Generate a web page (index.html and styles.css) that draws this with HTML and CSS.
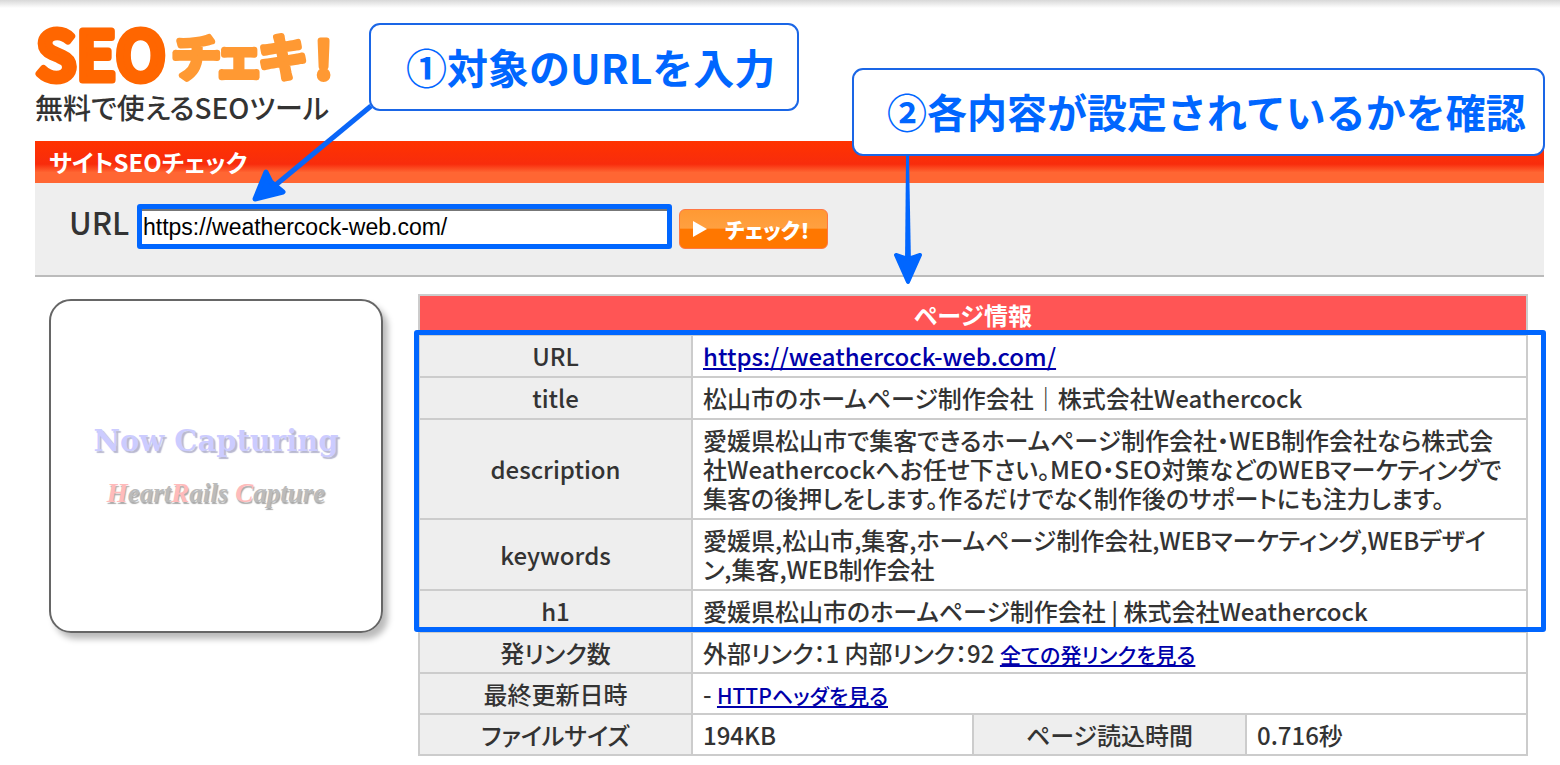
FILE: index.html
```
<!DOCTYPE html>
<html lang="ja">
<head>
    <meta charset="UTF-8">
    <meta name="viewport" content="width=device-width, initial-scale=1.0">
    <title>SEOチェキ！</title>
    <link rel="stylesheet" href="styles.css">
</head>
<body>
    <header>
        <h1>
            <svg class="logo" width="300" height="64" viewBox="0 0 300 64">
                <text class="logo-seo" x="1" y="56">SEO</text>
                <text class="logo-kana" x="138" y="52">チェキ</text>
                <text class="logo-kana" x="280" y="54">!</text>
            </svg>
        </h1>
        <p class="tagline">無料で使えるSEOツール</p>
    </header>
    <main>
        <h2 class="bar">サイトSEOチェック</h2>
        <form class="search">
            <label for="url">URL</label>
            <div class="url-box">
                <input type="text" id="url" value="https://weathercock-web.com/">
            </div>
            <button type="button">
                <svg width="14" height="16" viewBox="0 0 14 16"><path d="M0 0L14 8L0 16Z" fill="#fff"/></svg>
                <span>チェック！</span>
            </button>
        </form>

        <div class="result">
            <div class="capture">
                <p class="now">Now Capturing</p>
                <p class="heart"><b>H</b>eart<b>R</b>ails <b>C</b>apture</p>
            </div>
            <div class="info">
                <table>
                    <colgroup>
                        <col class="head">
                        <col class="data">
                        <col class="head">
                        <col class="data">
                    </colgroup>
                    <thead>
                        <tr><th colspan="4">ページ情報</th></tr>
                    </thead>
                    <tbody class="checked">
                        <tr><th>URL</th><td colspan="3"><a href="#">https://weathercock-web.com/</a></td></tr>
                        <tr><th>title</th><td colspan="3">松山市のホームページ制作会社｜株式会社Weathercock</td></tr>
                        <tr><th>description</th><td colspan="3">愛媛県松山市で集客できるホームページ制作会社・WEB制作会社なら株式会<br>社Weathercockへお任せ下さい。MEO・SEO対策などのWEBマーケティングで<br>集客の後押しをします。作るだけでなく制作後のサポートにも注力します。</td></tr>
                        <tr><th>keywords</th><td colspan="3">愛媛県,松山市,集客,ホームページ制作会社,WEBマーケティング,WEBデザイ<br>ン,集客,WEB制作会社</td></tr>
                        <tr><th>h1</th><td colspan="3">愛媛県松山市のホームページ制作会社 | 株式会社Weathercock</td></tr>
                    </tbody>
                    <tbody>
                        <tr><th>発リンク数</th><td colspan="3">外部リンク：1 内部リンク：92 <a class="more" href="#">全ての発リンクを見る</a></td></tr>
                        <tr><th>最終更新日時</th><td colspan="3">- <a class="more" href="#">HTTPヘッダを見る</a></td></tr>
                        <tr><th>ファイルサイズ</th><td>194KB</td><th>ページ読込時間</th><td>0.716秒</td></tr>
                    </tbody>
                </table>
                <div class="frame"></div>
            </div>
        </div>
    </main>

    <div class="callout callout-1">
        ①対象のURLを入力
        <svg class="arrow" width="124" height="102" viewBox="0 0 124 102">
            <path d="M121 2L22 84" stroke="#0a66f8" stroke-width="5"/>
            <path d="M5 95L16 68L21 78L33 88Z" fill="#0066ff" stroke="#0066ff" stroke-width="5" stroke-linejoin="round"/>
        </svg>
    </div>
    <div class="callout callout-2">
        ②各内容が設定されているかを確認
        <svg class="arrow" width="30" height="130" viewBox="0 0 30 130">
            <path d="M13 0H16L18 108H12Z" fill="#0066ff"/>
            <path d="M15 126L3 99L15 103L27 99Z" fill="#0066ff" stroke="#0066ff" stroke-width="4" stroke-linejoin="round"/>
        </svg>
    </div>
</body>
</html>
```
FILE: styles.css
```
* {
    box-sizing: border-box;
}

body {
    position: relative;
    margin: 0;
    padding: 24px 16px 7px 35px;
    background: linear-gradient(#d8d8d8, #ffffff 8px) no-repeat #ffffff;
    color: #333333;
    font-family: "Noto Sans CJK JP", sans-serif;
    font-feature-settings: "palt";
    font-weight: 500;
}

h1, h2, p {
    margin: 0;
}

.logo {
    display: block;
    overflow: visible;
    stroke-linejoin: round;
}

.logo-seo {
    fill: #ff6600;
    stroke: #ff6600;
    stroke-width: 7px;
    font-size: 66px;
    font-weight: 500;
}

.logo-kana {
    fill: #ff9933;
    stroke: #ff9933;
    stroke-width: 6px;
    font-size: 50px;
    font-weight: 500;
}

.tagline {
    height: 53px;
    font-size: 28px;
    line-height: 38px;
}

.bar {
    padding: 0 14px;
    background: linear-gradient(#ff3300, #f82c0c 55%, #ff6633 75%);
    color: #ffffff;
    font-size: 24px;
    font-weight: 700;
    line-height: 41px;
    height: 42px;
}

.search {
    display: flex;
    align-items: flex-start;
    height: 94px;
    padding: 21px 34px;
    background-color: #eeeeee;
    border-bottom: 2px solid #bbbbbb;
}

.search label {
    width: 68px;
    font-size: 31px;
    line-height: 36px;
}

.url-box {
    width: 535px;
    border: 5px solid #0066ff;
    border-radius: 3px;
}

.url-box input {
    display: block;
    width: 100%;
    height: 35px;
    padding: 2px 1px;
    border: 0;
    border-top: 2px solid #777777;
    background-color: #ffffff;
    color: #000000;
    font-family: "Liberation Sans", Arial, sans-serif;
    font-size: 23px;
}

.search button {
    display: flex;
    align-items: center;
    gap: 18px;
    width: 149px;
    height: 40px;
    margin: 5px 7px;
    padding: 0 13px;
    border: 1px solid #ff7744;
    border-radius: 6px;
    background: linear-gradient(#ff9933, #ffa040 48%, #ff7700 50%);
    color: #ffffff;
    font-family: inherit;
    font-feature-settings: inherit;
    font-size: 21px;
    font-weight: 900;
    white-space: nowrap;
}

.result {
    display: flex;
    align-items: flex-start;
    gap: 35px;
    padding: 17px 16px 0 14px;
}

.capture {
    flex: none;
    display: flex;
    flex-direction: column;
    align-items: center;
    width: 334px;
    height: 334px;
    margin-top: 5px;
    padding-top: 120px;
    border: 2px solid #666666;
    border-radius: 22px;
    box-shadow: 5px 6px 6px #bbbbbb;
}

.now {
    color: #ccccff;
    font-family: "DejaVu Serif", serif;
    font-size: 29px;
    font-weight: bold;
    line-height: 40px;
    text-shadow: 2px 2px 1px #b8b8d0;
}

.heart {
    margin-top: 12px;
    color: #bbbbbb;
    font-family: "Liberation Serif", serif;
    font-size: 27px;
    font-style: italic;
    font-weight: bold;
    line-height: 40px;
    text-shadow: 1px 2px 1px #aaaaaa;
}

.heart b {
    color: #ffbbbb;
}

.info {
    position: relative;
    flex: 1;
}

table {
    width: 100%;
    border-collapse: collapse;
    table-layout: fixed;
    font-size: 24px;
    line-height: 29px;
}

.head {
    width: 273px;
}

th, td {
    padding: 5px 10px;
    border: 2px solid #cccccc;
    font-weight: 500;
    text-align: left;
}

.checked th, .checked td {
    padding-bottom: 6px;
}

th {
    background-color: #eeeeee;
    text-align: center;
}

thead th {
    padding: 4px 10px 5px;
    background-color: #ff5555;
    color: #ffffff;
    font-weight: 700;
}

a {
    color: #0000aa;
}

.more {
    font-size: 21px;
    line-height: 1;
}

/* outline round the checked rows */
.frame {
    position: absolute;
    top: 36px;
    right: -18px;
    left: -4px;
    height: 302px;
    border: 5px solid #0066ff;
    border-radius: 3px;
}

.callout {
    position: absolute;
    height: 88px;
    border: 2px solid #1a66e6;
    border-radius: 11px;
    background-color: #ffffff;
    color: #0066ff;
    font-feature-settings: normal;
    font-weight: 700;
    line-height: 82px;
    white-space: nowrap;
}

.callout-1 {
    top: 23px;
    left: 369px;
    width: 430px;
    padding-left: 35px;
    font-size: 41px;
}

.callout-2 {
    top: 68px;
    right: 15px;
    width: 693px;
    padding-left: 33px;
    font-size: 40px;
}

.arrow {
    position: absolute;
}

.callout-1 .arrow {
    top: 79px;
    left: -121px;
}

.callout-2 .arrow {
    top: 86px;
    left: 39px;
}
```
